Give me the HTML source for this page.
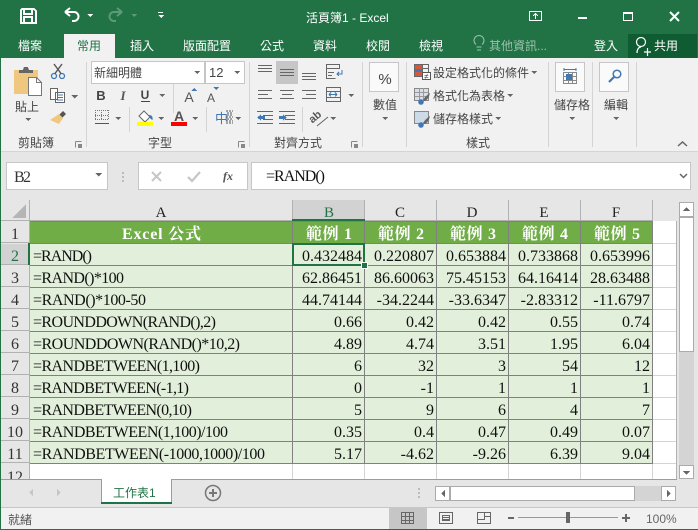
<!DOCTYPE html>
<html><head><meta charset="utf-8"><style>
html,body{margin:0;padding:0;width:698px;height:530px;overflow:hidden;background:#f1f1f1}
svg{display:block}
text{white-space:pre}
.s{font-family:"Liberation Sans","Noto Sans CJK TC",sans-serif;font-size:12px}
.r{font-family:"Noto Sans CJK TC","Liberation Sans",sans-serif;font-size:12px;fill:#444}
.w{fill:#fff}
.d{font-family:"Liberation Serif","Noto Serif CJK SC",serif;font-size:16px;fill:#111;text-anchor:end}
.f{font-family:"Liberation Serif","Noto Serif CJK SC",serif;font-size:16px;fill:#111}
.n{font-family:"Liberation Serif",serif;font-size:16px;fill:#333;text-anchor:middle}
.c{font-family:"Liberation Serif",serif;font-size:15px;fill:#222;text-anchor:middle}
.h{font-family:"Liberation Serif","Noto Serif CJK SC",serif;font-size:16px;font-weight:bold;fill:#fff;text-anchor:middle}
.l{stroke:#666;stroke-width:1;fill:none}
</style></head><body>
<svg width="698" height="530" viewBox="0 0 698 530" xmlns="http://www.w3.org/2000/svg" shape-rendering="crispEdges">
<rect width="698" height="530" fill="#f1f1f1"/>
<!-- title bar -->
<rect width="698" height="58" fill="#217346"/>
<path d="M22 9h12l2 2v12H21V10zM24 9v5h8V9M24 23v-6h8v6" fill="none" stroke="#fff" stroke-width="2"/>
<g shape-rendering="auto">
<path d="M65 12l5-4M65 12l5 4M65 12h9a4.500 4.500 0 0 1 0 9h-2" fill="none" stroke="#fff" stroke-width="2"/>
<path d="M122 12l-5-4M122 12l-5 4M122 12h-8a4.500 4.500 0 0 0 0 9h2" fill="none" stroke="#5c9a79" stroke-width="2"/>
</g>
<path d="M87 14h6l-3 3z" fill="#fff"/><path d="M131 14h6l-3 3z" fill="#5c9a79"/>
<path d="M158 12h5v1h-5zM158 15h6l-3 3z" fill="#fff"/>
<text class="s w" x="306" y="22">活頁簿1 - Excel</text>
<path d="M529.500 11.500h12v9h-12zM535.500 19v-5M533 16l2.500-2.500L538 16" fill="none" stroke="#fff"/>
<rect x="578" y="17" width="9" height="2" fill="#fff"/>
<path d="M623.500 12.500h9v8h-9z" fill="none" stroke="#fff"/><rect x="623" y="12" width="10" height="2" fill="#fff"/>
<path d="M670 12l9 9M679 12l-9 9" stroke="#fff" stroke-width="2" shape-rendering="auto"/>
<!-- tabs -->
<rect x="64" y="34" width="51" height="24" fill="#f1f1f1"/>
<rect x="628" y="34" width="69" height="24" fill="#0f5c33"/>
<text class="s w" x="18" y="50">檔案</text>
<text class="s" x="77" y="50" fill="#217346">常用</text>
<text class="s w" x="130" y="50">插入</text>
<text class="s w" x="183" y="50">版面配置</text>
<text class="s w" x="260" y="50">公式</text>
<text class="s w" x="313" y="50">資料</text>
<text class="s w" x="366" y="50">校閱</text>
<text class="s w" x="419" y="50">檢視</text>
<g shape-rendering="auto"><path d="M477 50h4M476.500 47h5M476 44.500a5 5 0 1 1 6 0" fill="none" stroke="#9dc0ad"/></g>
<text class="s" x="489" y="50" fill="#9dc0ad">其他資訊...</text>
<text class="s w" x="594" y="50">登入</text>
<g shape-rendering="auto"><circle cx="641" cy="42" r="4.500" fill="none" stroke="#fff" stroke-width="1.200"/><path d="M637 53c0-4 2-6 4-6M644 52h7M647.500 48v8" fill="none" stroke="#fff" stroke-width="1.200"/></g>
<text class="s w" x="654" y="50">共用</text>
<!-- ribbon -->
<rect x="0" y="151" width="698" height="1" fill="#d4d4d4"/>
<rect x="0" y="152" width="698" height="48" fill="#e6e6e6"/>
<g fill="#d4d4d4">
<rect x="86" y="62" width="1" height="85"/><rect x="249" y="62" width="1" height="85"/><rect x="362" y="62" width="1" height="85"/>
<rect x="406" y="62" width="1" height="85"/><rect x="548" y="62" width="1" height="85"/><rect x="592" y="62" width="1" height="85"/>
<rect x="636" y="62" width="1" height="85"/><rect x="173" y="84" width="1" height="29"/><rect x="129" y="107" width="1" height="25"/>
<rect x="206" y="107" width="1" height="25"/><rect x="302" y="107" width="1" height="25"/>
</g>
<!-- clipboard -->
<rect x="14" y="70" width="24" height="24" fill="#efc77f"/>
<path d="M19 73v-3h4l1-3h4l1 3h4v3z" fill="#666"/>
<path d="M28.500 77.500h8l5 5v13h-13z" fill="#fff" stroke="#777"/><path d="M36.500 77.500v5h5" fill="none" stroke="#777"/>
<text class="r" x="15" y="111">貼上</text>
<path d="M25 118h6l-3 3z" fill="#666"/>
<g shape-rendering="auto">
<circle cx="54" cy="76" r="2.500" fill="none" stroke="#3f78b3" stroke-width="1.300"/><circle cx="62" cy="76" r="2.500" fill="none" stroke="#3f78b3" stroke-width="1.300"/>
<path d="M55 73.500L62 64M61 73.500L54 64" stroke="#555" stroke-width="1.400" fill="none"/>
<path d="M63 111l3 3-4 4-3-3z" fill="#555"/><path d="M59 114l4 4-4 6-9-4 3-2z" fill="#efc77f"/>
</g>
<path d="M50.500 88.500h7v11h-7zM55.500 92.500h9v10h-9z" fill="#fff" stroke="#666"/><path d="M57 95h6M57 97.500h6M57 100h6" stroke="#3f78b3"/>
<path d="M71 95h7l-3.500 3.500z" fill="#666"/>
<text class="r" x="18" y="147">剪貼簿</text>
<path d="M75.500 141.500h6M75.500 141.500v6" stroke="#888" fill="none"/><path d="M78 144h4v4h-4z" fill="#888"/>
<!-- font -->
<rect x="91.500" y="61.500" width="113" height="22" fill="#fff" stroke="#c6c6c6"/>
<rect x="205.500" y="61.500" width="39" height="22" fill="#fff" stroke="#c6c6c6"/>
<text class="r" x="94" y="77">新細明體</text>
<text class="s" x="209" y="77" fill="#444" style="font-size:13px">12</text>
<path d="M194 71h6l-3 3zM234 71h6l-3 3z" fill="#666"/>
<text x="101" y="100" text-anchor="middle" style="font:bold 13px 'Liberation Sans'" fill="#444">B</text>
<text x="123" y="100" text-anchor="middle" style="font:italic bold 13px 'Liberation Serif'" fill="#555">I</text>
<text x="145" y="99" text-anchor="middle" style="font:bold 12px 'Liberation Sans'" fill="#444">U</text>
<rect x="141" y="101" width="9" height="1" fill="#444"/>
<path d="M159 94h6l-3 3z" fill="#666"/>
<text x="189" y="102" text-anchor="middle" style="font:14px 'Liberation Sans'" fill="#555">A</text>
<path d="M191 91h6l-3-3z" fill="#3f78b3"/>
<text x="211" y="102" text-anchor="middle" style="font:12px 'Liberation Sans'" fill="#555">A</text>
<path d="M213 87h6l-3 3z" fill="#3f78b3"/>
<path d="M95 110.500h14M95 115.500h14M95 119.500h14M95.500 110v10M101.500 110v10M108.500 110v10" stroke="#777" stroke-dasharray="1 1" fill="none"/>
<rect x="95" y="123" width="14" height="1" fill="#555"/>
<path d="M115 117h6l-3 3z" fill="#666"/>
<g shape-rendering="auto"><path d="M144 111l6 6-5 5-6-6z" fill="#fff" stroke="#666"/><path d="M149 115c3 0 4 2 3.500 5-2-1-3-2-3.500-5z" fill="#3f78b3"/></g>
<rect x="137" y="122" width="16" height="4" fill="#ff0"/>
<path d="M158 117h6l-3 3zM192 117h6l-3 3zM235 117h6l-3 3z" fill="#666"/>
<text x="179" y="121" text-anchor="middle" style="font:bold 14px 'Liberation Sans'" fill="#555">A</text>
<rect x="171" y="122" width="16" height="4" fill="#f00"/>
<text x="215" y="123" style="font:13px 'Noto Sans CJK TC'" fill="#3f78b3">中</text>
<path d="M226 111h7M227 113h5M227 115h5M226 117h7M227 119h5M226 121h7M226 123h7" stroke="#555" stroke-dasharray="2 1"/>
<text class="r" x="148" y="147">字型</text>
<path d="M238.500 141.500h6M238.500 141.500v6" stroke="#888" fill="none"/><path d="M241 144h4v4h-4z" fill="#888"/>
<!-- align -->
<rect x="276" y="61" width="22" height="23" fill="#c6c6c6"/>
<path class="l" d="M258 65.500h14M258 68.500h14M258 71.500h14M280 69.500h14M280 72.500h14M280 75.500h14M302 73.500h14M302 76.500h14M302 79.500h14"/>
<path class="l" d="M258 90.500h14M258 94.500h10M258 98.500h14M280 90.500h14M282 94.500h10M280 98.500h14M302 90.500h14M306 94.500h10M302 98.500h14"/>
<path class="l" d="M326.500 64.500h13v4h-13zM326.500 68.500v10h9M328 72.500h6M328 75.500h4"/>
<path d="M342 70v4h-5M339 72l-2 2 2 2" fill="none" stroke="#3f78b3"/>
<path class="l" d="M326.500 87.500h14v14h-14zM326.500 91.500h14M326.500 97.500h14"/>
<path d="M329 94.500h8M329 94.500l2-2M329 94.500l2 2M337 94.500l-2-2M337 94.500l-2 2" stroke="#3f78b3" fill="none"/>
<path d="M348 94h6l-3 3zM330 117h6l-3 3z" fill="#666"/>
<path class="l" d="M257 111.500h16M263 115.500h10M263 119.500h10M257 123.500h16M279 111.500h16M285 115.500h10M285 119.500h10M279 123.500h16"/>
<path d="M257 117.500l4-3v6zM261 116h4v3h-4zM283 114.500l4 3-4 3zM279 116h4v3h-4z" fill="#3f78b3"/>
<text x="316" y="120" transform="rotate(-40 316 118)" text-anchor="middle" style="font:bold 11px 'Liberation Sans'" fill="#555">ab</text>
<path d="M317 126l11-9" stroke="#666" shape-rendering="auto"/>
<text class="r" x="274" y="147">對齊方式</text>
<path d="M351.500 141.500h6M351.500 141.500v6" stroke="#888" fill="none"/><path d="M354 144h4v4h-4z" fill="#888"/>
<!-- number -->
<rect x="369.500" y="62.500" width="29" height="29" fill="#fafafa" stroke="#c6c6c6"/>
<text x="385" y="84" text-anchor="middle" style="font:15px 'Liberation Sans'" fill="#444">%</text>
<text class="r" x="373" y="109">數值</text>
<path d="M382 117h6l-3 3z" fill="#666"/>
<!-- styles -->
<rect x="415" y="65" width="7" height="4" fill="#d8563a"/><rect x="415" y="69" width="7" height="3" fill="#3f78b3"/><rect x="415" y="72" width="7" height="4" fill="#d8563a"/>
<path class="l" d="M414.500 64.500h14v12h-14zM422.500 64v8M422 68.500h7"/>
<rect x="422.500" y="72.500" width="8" height="7" fill="#fff" stroke="#555"/>
<text x="426.500" y="79" text-anchor="middle" style="font:8px 'Liberation Sans'" fill="#444">≠</text>
<text class="r" x="433" y="77">設定格式化的條件</text>
<path d="M531 71h6l-3 3z" fill="#666"/>
<rect x="414.500" y="88.500" width="14" height="12" fill="#d8dfe9" stroke="#888"/>
<path d="M415 92.500h13M415 96.500h13M419.500 88v12M423.500 88v12" stroke="#999"/>
<g shape-rendering="auto"><path d="M423 100c2-3 4-5 7-7-1 4-2 6-5 8z" fill="#666"/><circle cx="421" cy="102" r="2.800" fill="#3f78b3"/></g>
<text class="r" x="433" y="100">格式化為表格</text>
<path d="M507 94h6l-3 3z" fill="#666"/>
<rect x="414.500" y="111.500" width="14" height="12" fill="#cddbe9" stroke="#888"/>
<g shape-rendering="auto"><path d="M423 123c2-3 4-5 7-7-1 4-2 6-5 8z" fill="#666"/><circle cx="421" cy="125" r="2.800" fill="#3f78b3"/></g>
<text class="r" x="433" y="123">儲存格樣式</text>
<path d="M495 117h6l-3 3z" fill="#666"/>
<text class="r" x="466" y="147">樣式</text>
<!-- cells/edit -->
<rect x="555.500" y="62.500" width="29" height="29" fill="#fafafa" stroke="#c6c6c6"/>
<path d="M564 69.500h12M564 68v3M576 68v3" stroke="#3f78b3" fill="none"/>
<path d="M563.500 72.500h13v11h-13zM563.500 76.500h13M563.500 80.500h13M568.500 72v12M572.500 72v12" stroke="#888" fill="none"/>
<rect x="566" y="74" width="6" height="6" fill="#3f78b3"/>
<text class="r" x="554" y="109">儲存格</text>
<path d="M569 117h6l-3 3z" fill="#666"/>
<rect x="599.500" y="62.500" width="29" height="29" fill="#fafafa" stroke="#c6c6c6"/>
<g shape-rendering="auto"><circle cx="617" cy="74" r="3.800" fill="none" stroke="#3f78b3" stroke-width="1.500"/><path d="M614 77l-5 5" stroke="#3f78b3" stroke-width="2.200"/></g>
<text class="r" x="604" y="109">編輯</text>
<path d="M613 117h6l-3 3z" fill="#666"/>
<path d="M678 146l4.500-4 4.500 4" stroke="#666" stroke-width="1.500" fill="none" shape-rendering="auto"/>
<!-- formula bar -->
<rect x="6.500" y="162.500" width="101" height="27" fill="#fff" stroke="#c6c6c6"/>
<text x="14" y="182" style="font:16px 'Liberation Serif'" fill="#333" textLength="17">B2</text>
<path d="M95 173h7l-3.500 3.500z" fill="#666"/>
<path d="M122 172h2v2h-2zM122 176h2v2h-2zM122 180h2v2h-2z" fill="#bbb"/>
<rect x="138.500" y="162.500" width="109" height="27" fill="#fff" stroke="#c6c6c6"/>
<rect x="251.500" y="162.500" width="439" height="27" fill="#fff" stroke="#c6c6c6"/>
<g shape-rendering="auto"><path d="M152 172l9 9M161 172l-9 9" stroke="#c6c6c6" stroke-width="2"/><path d="M188 177l4 4 8-9" stroke="#c6c6c6" stroke-width="2.200" fill="none"/></g>
<text x="228" y="180" text-anchor="middle" style="font:italic bold 12px 'Liberation Serif'" fill="#555">fx</text>
<text class="f" x="266" y="181" textLength="59" lengthAdjust="spacing">=RAND()</text>
<path d="M680 174l3.500 3.500 3.500-3.500" stroke="#666" stroke-width="1.500" fill="none" shape-rendering="auto"/>
<!-- grid background -->
<rect x="0" y="200" width="698" height="279" fill="#e6e6e6"/>
<rect x="30" y="221" width="647" height="258" fill="#fff"/>
<rect x="30" y="221" width="623" height="22" fill="#70ad47"/>
<rect x="30" y="243" width="623" height="220" fill="#e2efda"/>
<rect x="293" y="200" width="71" height="21" fill="#d2d2d2"/>
<rect x="1" y="244" width="28" height="21" fill="#d2d2d2"/>
<path d="M12 218l14-14v14z" fill="#b5b5b5"/>
<!-- header separators -->
<path d="M29.500 200v279M292.500 200v21M364.500 200v21M436.500 200v21M508.500 200v21M580.500 200v21M652.500 200v21" stroke="#b1b1b1"/>
<path d="M1 220.500h28M30 220.500h623M1 242.500h28M1 264.500h28M1 286.500h28M1 308.500h28M1 330.500h28M1 352.500h28M1 374.500h28M1 396.500h28M1 418.500h28M1 440.500h28M1 462.500h28" stroke="#b1b1b1"/>
<!-- light gridlines -->
<path d="M653 243.500h23M653 265.500h23M653 287.500h23M653 309.500h23M653 331.500h23M653 353.500h23M653 375.500h23M653 397.500h23M653 419.500h23M653 441.500h23M653 463.500h23M292.500 464v15M364.500 464v15M436.500 464v15M508.500 464v15M580.500 464v15M652.500 464v15" stroke="#d4d4d4"/>
<rect x="676" y="221" width="1" height="258" fill="#b1b1b1"/>
<!-- data lines -->
<path d="M30 221.500h623M30 243.500h623M30 265.500h623M30 287.500h623M30 309.500h623M30 331.500h623M30 353.500h623M30 375.500h623M30 397.500h623M30 419.500h623M30 441.500h623M30 463.500h623M292.500 221v243M364.500 221v243M436.500 221v243M508.500 221v243M580.500 221v243M652.500 221v243" stroke="#808080"/>
<!-- column headers -->
<text class="c" x="161" y="217">A</text>
<text class="c" x="329" y="217" style="fill:#217346">B</text>
<text class="c" x="400" y="217">C</text>
<text class="c" x="472" y="217">D</text>
<text class="c" x="544" y="217">E</text>
<text class="c" x="616" y="217">F</text>
<!-- row headers -->
<g transform="translate(0,-1)">
<text class="n" x="15" y="240">1</text>
<text class="n" x="15" y="262" style="fill:#217346">2</text>
<text class="n" x="15" y="284">3</text><text class="n" x="15" y="306">4</text><text class="n" x="15" y="328">5</text>
<text class="n" x="15" y="350">6</text><text class="n" x="15" y="372">7</text><text class="n" x="15" y="394">8</text>
<text class="n" x="15" y="416">9</text><text class="n" x="15" y="438">10</text><text class="n" x="15" y="460">11</text>
<text class="n" x="15" y="483">12</text>
</g>
<!-- header row -->
<text class="h" x="161.500" y="239" textLength="79">Excel 公式</text>
<text class="h" x="329" y="239" textLength="46">範例 1</text><text class="h" x="401" y="239" textLength="46">範例 2</text><text class="h" x="473" y="239" textLength="46">範例 3</text><text class="h" x="545" y="239" textLength="46">範例 4</text><text class="h" x="617" y="239" textLength="46">範例 5</text>
<g transform="translate(0,-1)">
<!-- formulas -->
<text class="f" x="33" y="262" textLength="59">=RAND()</text>
<text class="f" x="33" y="284" textLength="91">=RAND()*100</text>
<text class="f" x="33" y="306" textLength="113">=RAND()*100-50</text>
<text class="f" x="33" y="328" textLength="183">=ROUNDDOWN(RAND(),2)</text>
<text class="f" x="33" y="350" textLength="207">=ROUNDDOWN(RAND()*10,2)</text>
<text class="f" x="33" y="372" textLength="167">=RANDBETWEEN(1,100)</text>
<text class="f" x="33" y="394" textLength="156">=RANDBETWEEN(-1,1)</text>
<text class="f" x="33" y="416" textLength="159">=RANDBETWEEN(0,10)</text>
<text class="f" x="33" y="438" textLength="195">=RANDBETWEEN(1,100)/100</text>
<text class="f" x="33" y="460" textLength="232">=RANDBETWEEN(-1000,1000)/100</text>
<!-- values -->
<text class="d" x="362" y="262">0.432484</text><text class="d" x="434" y="262">0.220807</text><text class="d" x="506" y="262">0.653884</text><text class="d" x="578" y="262">0.733868</text><text class="d" x="650" y="262">0.653996</text>
<text class="d" x="362" y="284">62.86451</text><text class="d" x="434" y="284">86.60063</text><text class="d" x="506" y="284">75.45153</text><text class="d" x="578" y="284">64.16414</text><text class="d" x="650" y="284">28.63488</text>
<text class="d" x="362" y="306">44.74144</text><text class="d" x="434" y="306">-34.2244</text><text class="d" x="506" y="306">-33.6347</text><text class="d" x="578" y="306">-2.83312</text><text class="d" x="650" y="306">-11.6797</text>
<text class="d" x="362" y="328">0.66</text><text class="d" x="434" y="328">0.42</text><text class="d" x="506" y="328">0.42</text><text class="d" x="578" y="328">0.55</text><text class="d" x="650" y="328">0.74</text>
<text class="d" x="362" y="350">4.89</text><text class="d" x="434" y="350">4.74</text><text class="d" x="506" y="350">3.51</text><text class="d" x="578" y="350">1.95</text><text class="d" x="650" y="350">6.04</text>
<text class="d" x="362" y="372">6</text><text class="d" x="434" y="372">32</text><text class="d" x="506" y="372">3</text><text class="d" x="578" y="372">54</text><text class="d" x="650" y="372">12</text>
<text class="d" x="362" y="394">0</text><text class="d" x="434" y="394">-1</text><text class="d" x="506" y="394">1</text><text class="d" x="578" y="394">1</text><text class="d" x="650" y="394">1</text>
<text class="d" x="362" y="416">5</text><text class="d" x="434" y="416">9</text><text class="d" x="506" y="416">6</text><text class="d" x="578" y="416">4</text><text class="d" x="650" y="416">7</text>
<text class="d" x="362" y="438">0.35</text><text class="d" x="434" y="438">0.4</text><text class="d" x="506" y="438">0.47</text><text class="d" x="578" y="438">0.49</text><text class="d" x="650" y="438">0.07</text>
<text class="d" x="362" y="460">5.17</text><text class="d" x="434" y="460">-4.62</text><text class="d" x="506" y="460">-9.26</text><text class="d" x="578" y="460">6.39</text><text class="d" x="650" y="460">9.04</text>
</g>
<!-- selection -->
<rect x="293" y="244" width="71" height="21" fill="none" stroke="#217346" stroke-width="2"/>
<rect x="292" y="219" width="73" height="2" fill="#217346"/>
<rect x="28" y="243" width="2" height="22" fill="#217346"/>
<rect x="361.500" y="262.500" width="6" height="6" fill="#217346" stroke="#fff"/>
<!-- vertical scrollbar -->
<rect x="677" y="200" width="21" height="279" fill="#e6e6e6"/>
<rect x="679" y="217" width="15" height="249" fill="#d4d4d4"/>
<rect x="679.500" y="202.500" width="14" height="14" fill="#fff" stroke="#ababab"/>
<rect x="679.500" y="217.500" width="14" height="134" fill="#fff" stroke="#ababab"/>
<rect x="679.500" y="465.500" width="14" height="13" fill="#fff" stroke="#ababab"/>
<path d="M683 211h7l-3.500-4zM683 471h7l-3.500 4z" fill="#666"/>
<!-- sheet tabs -->
<rect x="0" y="479" width="698" height="29" fill="#e6e6e6"/>
<rect x="0" y="479" width="677" height="1" fill="#9c9c9c"/>
<rect x="101" y="479" width="71" height="25" fill="#fff"/>
<path d="M101.500 479v24M171.500 479v24" stroke="#9c9c9c"/>
<rect x="101" y="502" width="71" height="2" fill="#217346"/>
<text class="s" x="113" y="497" fill="#217346">工作表1</text>
<path d="M33 489v7l-4-3.500zM57 489v7l4-3.500z" fill="#c6c6c6"/>
<g shape-rendering="auto"><circle cx="213" cy="493" r="7.500" fill="none" stroke="#777" stroke-width="1.500"/></g>
<path d="M209 492h8v2h-8zM212 489h2v8h-2z" fill="#777"/>
<path d="M418 488h2v2h-2zM418 492h2v2h-2zM418 496h2v2h-2z" fill="#bbb"/>
<rect x="436" y="486" width="240" height="15" fill="#d4d4d4"/>
<rect x="435.500" y="486.500" width="14" height="14" fill="#fff" stroke="#ababab"/>
<rect x="450.500" y="486.500" width="184" height="14" fill="#fff" stroke="#ababab"/>
<rect x="661.500" y="486.500" width="14" height="14" fill="#fff" stroke="#ababab"/>
<path d="M445 490v7l-4-3.500zM667 490v7l4-3.500z" fill="#666"/>
<!-- status bar -->
<rect x="0" y="507" width="698" height="1" fill="#c6c6c6"/>
<rect x="0" y="508" width="698" height="21" fill="#f1f1f1"/>
<text class="s" x="8" y="524" fill="#555">就緒</text>
<rect x="389" y="508" width="38" height="21" fill="#c6c6c6"/>
<path d="M401.500 512.500h12v11h-12zM401.500 516.500h12M401.500 520.500h12M405.500 512v12M409.500 512v12" fill="none" stroke="#666"/>
<path d="M439.500 512.500h13v11h-13zM442.500 515.500h7v5h-7zM443 517.500h6M443 519.500h6" fill="none" stroke="#666"/>
<path d="M477.500 512.500h13v11h-13zM477.500 519.500h7v-7M484.500 516.500h6" fill="none" stroke="#666"/>
<rect x="508" y="517" width="6" height="2" fill="#666"/>
<rect x="518" y="517" width="100" height="1" fill="#999"/>
<rect x="566" y="512" width="4" height="11" fill="#666"/>
<path d="M622 517h8v2h-8zM625 514h2v8h-2z" fill="#666"/>
<text class="s" x="646" y="523" fill="#666">100%</text>
<!-- window edges -->
<rect x="0" y="58" width="1" height="471" fill="#217346"/>
<rect x="0" y="529" width="698" height="1" fill="#217346"/>
</svg>
</body></html>
